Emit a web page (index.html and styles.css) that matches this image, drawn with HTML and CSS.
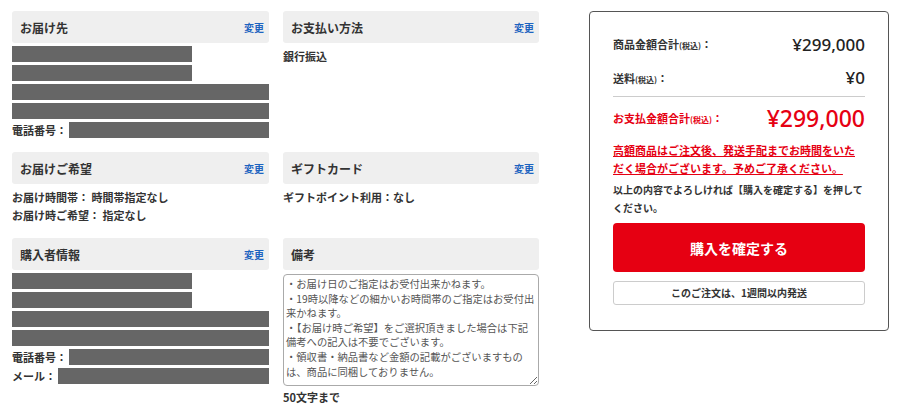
FILE: index.html
```html
<!DOCTYPE HTML>
<html>
<head>
<meta name="viewport" content="width=device-width, initial-scale=1">
<title>ご注文内容の確認</title>
<link rel="stylesheet" href="styles.css">
</head>
<body>
<div class="page">
  <div class="sections">
    <div class="card">
      <div class="head"><span>お届け先</span><a href="#">変更</a></div>
      <div class="bars">
        <div class="bar short"></div>
        <div class="bar short"></div>
        <div class="bar"></div>
        <div class="bar"></div>
        <div class="row"><span>電話番号：</span><div class="bar"></div></div>
      </div>
    </div>
    <div class="card">
      <div class="head"><span>お支払い方法</span><a href="#">変更</a></div>
      <p class="txt">銀行振込</p>
    </div>
    <div class="card">
      <div class="head"><span>お届けご希望</span><a href="#">変更</a></div>
      <p class="txt">お届け時間帯： 時間帯指定なし<br>お届け時ご希望： 指定なし</p>
    </div>
    <div class="card">
      <div class="head"><span>ギフトカード</span><a href="#">変更</a></div>
      <p class="txt">ギフトポイント利用：なし</p>
    </div>
    <div class="card">
      <div class="head"><span>購入者情報</span><a href="#">変更</a></div>
      <div class="bars">
        <div class="bar short"></div>
        <div class="bar short"></div>
        <div class="bar"></div>
        <div class="bar"></div>
        <div class="row"><span>電話番号：</span><div class="bar"></div></div>
        <div class="row"><span>メール：</span><div class="bar"></div></div>
      </div>
    </div>
    <div class="card">
      <div class="head"><span>備考</span></div>
      <textarea class="memo" placeholder="・お届け日のご指定はお受付出来かねます。
・19時以降などの細かいお時間帯のご指定はお受付出来かねます。
・【お届け時ご希望】をご選択頂きました場合は下記備考への記入は不要でございます。
・領収書・納品書など金額の記載がございますものは、商品に同梱しておりません。"></textarea>
      <p class="limit">50文字まで</p>
    </div>
  </div>

  <div class="summary">
    <div class="line"><span class="lbl">商品金額合計<small>(税込)</small>：</span><span class="amt">¥299,000</span></div>
    <div class="line"><span class="lbl">送料<small>(税込)</small>：</span><span class="amt">¥0</span></div>
    <div class="line total"><span class="lbl">お支払金額合計<small>(税込)</small>：</span><span class="amt">¥299,000</span></div>
    <p class="notice">高額商品はご注文後、発送手配までお時間をいただく場合がございます。予めご了承ください。</p>
    <p class="confirm">以上の内容でよろしければ【購入を確定する】を押してください。</p>
    <button class="buy">購入を確定する</button>
    <div class="ship">このご注文は、1週間以内発送</div>
  </div>
</div>
</body>
</html>
```

FILE: styles.css
```css
body {
  margin: 0;
  font-family: "Noto Sans CJK JP", "Noto Sans", sans-serif;
  color: #333;
  background: #fff;
}
.page {
  display: flex;
  align-items: flex-start;
  padding: 11px 0 0 12px;
}
.sections {
  display: grid;
  grid-template-columns: 257px 256px;
  column-gap: 14px;
  row-gap: 14px;
  width: 527px;
}
.head {
  display: flex;
  justify-content: space-between;
  align-items: center;
  height: 32px;
  padding: 0 5px 0 8px;
  background: #efefef;
  border-radius: 3px;
  font-size: 12px;
  font-weight: bold;
}
.head a {
  color: #1d64c0;
  font-size: 10px;
  text-decoration: none;
}
.bars {
  display: flex;
  flex-direction: column;
  gap: 3px;
  margin-top: 3px;
}
.bar {
  height: 16px;
  background: #666;
}
.bar.short {
  width: 180px;
}
.row {
  display: flex;
  align-items: center;
  font-size: 11px;
  font-weight: bold;
  height: 16px;
}
.row span {
  white-space: nowrap;
  padding-right: 2px;
}
.row .bar {
  flex: 1;
}
.txt {
  margin: 4px 0 0;
  font-size: 11px;
  font-weight: bold;
  line-height: 18px;
}
.memo {
  display: block;
  box-sizing: border-box;
  width: 100%;
  height: 112px;
  margin-top: 4px;
  padding: 2px 0 2px 2px;
  border: 1px solid #aaa;
  border-radius: 4px;
  font-family: inherit;
  font-size: 10.3px;
  line-height: 14.6px;
  resize: vertical;
}
.memo::placeholder {
  color: #555;
  opacity: 1;
}
.limit {
  margin: 3px 0 0;
  font-size: 11px;
  font-weight: bold;
}
.summary {
  width: 300px;
  box-sizing: border-box;
  margin-left: 50px;
  padding: 15px 23px 25px;
  border: 1px solid #555;
  border-radius: 4px;
}
.line {
  display: flex;
  justify-content: space-between;
  align-items: center;
  height: 34px;
}
.line:nth-child(2) {
  border-bottom: 1px solid #ccc;
  height: 35px;
  align-items: flex-start;
}
.line:nth-child(2) .lbl {
  line-height: 34px;
}
.line:nth-child(2) .amt {
  line-height: 34px;
}
.lbl {
  font-size: 11px;
  font-weight: bold;
}
.lbl small {
  font-size: 8px;
}
.amt {
  font-family: "Noto Sans", sans-serif;
  font-size: 17px;
  font-weight: 500;
  color: #222;
}
.total {
  height: 42px;
  color: #e60012;
}
.total .amt {
  color: #e60012;
  font-size: 23px;
}
.notice {
  margin: 2px 0 0;
  color: #e60012;
  font-size: 11px;
  font-weight: bold;
  line-height: 18px;
  text-decoration: underline;
}
.confirm {
  margin: 4px 0 0;
  font-size: 10px;
  font-weight: bold;
  line-height: 18px;
}
.buy {
  display: block;
  width: 100%;
  height: 49px;
  margin-top: 6px;
  border: 0;
  border-radius: 4px;
  background: #e60012;
  color: #fff;
  font-family: inherit;
  font-size: 14px;
  font-weight: bold;
}
.ship {
  margin-top: 9px;
  height: 24px;
  box-sizing: border-box;
  border: 1px solid #ccc;
  border-radius: 3px;
  text-align: center;
  line-height: 22px;
  font-size: 10px;
  font-weight: bold;
}
```
